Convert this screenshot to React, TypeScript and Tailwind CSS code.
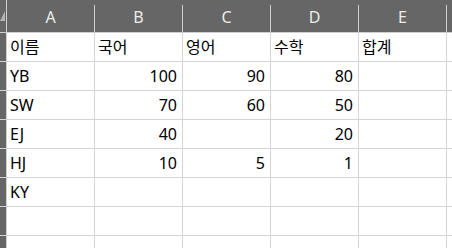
const cols = ["A", "B", "C", "D", "E"];

const rows: string[][] = [
  ["이름", "국어", "영어", "수학", "합계"],
  ["YB", "100", "90", "80", ""],
  ["SW", "70", "60", "50", ""],
  ["EJ", "40", "", "20", ""],
  ["HJ", "10", "5", "1", ""],
  ["KY", "", "", "", ""],
  ["", "", "", "", ""],
  ["", "", "", "", ""],
];

const isNum = (v: string) => /^\d+$/.test(v);

export default function App() {
  return (
    <div
      className="w-[452px] h-[248px] overflow-hidden bg-white text-[16px] text-black"
      style={{ fontFamily: '"Noto Sans", "Noto Sans CJK KR", sans-serif' }}
    >
      {/* column headers */}
      <div className="flex h-[33px] bg-[#666666] border-b border-[#d0d0d0]">
        <div className="relative w-[7px] shrink-0 border-r border-[#d0d0d0]">
          <svg className="absolute left-0 top-[10px]" width="6" height="11" viewBox="0 0 6 11">
            <polygon points="0,11 5,11 5,1" fill="#b4b4b4" />
          </svg>
        </div>
        {cols.map((c) => (
          <div key={c} className="w-[88px] shrink-0 pt-[5px]">
            <div className="flex h-full items-center justify-center border-r border-[#d0d0d0] pb-[4px] text-[#ececec]">
              {c}
            </div>
          </div>
        ))}
        <div className="flex-1" />
      </div>

      {rows.map((r, i) => (
        <div key={i} className="flex h-[29px] border-b border-[#d4d4d4]">
          <div className="w-[7px] shrink-0 bg-[#666666] border-r border-[#d0d0d0]" />
          {r.map((v, j) => (
            <div
              key={j}
              className={`flex w-[88px] shrink-0 items-center border-r border-[#d4d4d4] pb-[1px] ${
                isNum(v) ? "justify-end pr-[5px]" : "pl-[3px]"
              }`}
            >
              {v}
            </div>
          ))}
          <div className="flex-1" />
        </div>
      ))}
    </div>
  );
}
